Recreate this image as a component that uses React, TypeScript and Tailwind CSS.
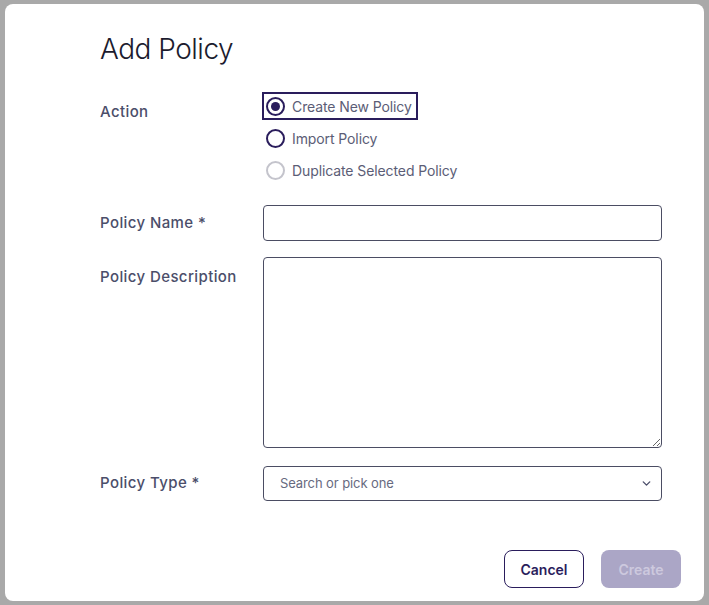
import { ChevronDown } from "lucide-react"

const font = { fontFamily: "Inter, 'Noto Sans', sans-serif" }

function Radio({ label, checked, focused, disabled }: { label: string; checked?: boolean; focused?: boolean; disabled?: boolean }) {
  return (
    <div className="h-[26px] flex items-center">
      <div
        className={
          "h-[26px] flex items-center gap-[7px] pl-[3px] pr-[5px] " +
          (focused ? "outline-2 outline-[#2a1d5c] -outline-offset-1" : "")
        }
      >
        <span
          className={
            "w-[19px] h-[19px] rounded-full border-2 flex items-center justify-center bg-white " +
            (disabled ? "border-[#c4c4cc]" : "border-[#2a1d5c]")
          }
        >
          {checked && <span className="w-[9px] h-[9px] rounded-full bg-[#2a1d5c]" />}
        </span>
        <span className="text-[14px] text-[#5b5d76] tracking-[-0.1px]">{label}</span>
      </div>
    </div>
  )
}

export default function App() {
  return (
    <div className="w-[709px] h-[605px] bg-[#a9a9a9] pt-[4px] pb-[4px] px-[5px]" style={font}>
      <div className="bg-white rounded-[8px] h-full pl-[95px] pr-[23px] pt-[27px] flex flex-col">
        <h1 className="text-[28px] leading-[36px] text-[#1c1b2e] font-light tracking-[-0.5px]">Add Policy</h1>

        <div className="flex mt-[26px]">
          <div className="w-[163px] pt-[8px] text-[15px] font-medium tracking-[0.4px] text-[#4b4e6a]">Action</div>
          <div className="flex flex-col gap-[6px]">
            <Radio label="Create New Policy" checked focused />
            <Radio label="Import Policy" />
            <Radio label="Duplicate Selected Policy" disabled />
          </div>
        </div>

        <div className="flex items-center mt-[22px] mr-[19px]">
          <div className="w-[163px] text-[15px] font-medium tracking-[0.4px] text-[#4b4e6a]">Policy Name *</div>
          <input className="flex-1 h-[36px] border border-[#4b4d63] rounded-[4px] px-3 text-sm outline-none" />
        </div>

        <div className="flex mt-[16px] mr-[19px]">
          <div className="w-[163px] pt-[9px] text-[15px] font-medium tracking-[0.4px] text-[#4b4e6a]">Policy Description</div>
          <textarea className="flex-1 h-[191px] border border-[#4b4d63] rounded-[4px] px-3 py-2 text-sm outline-none" />
        </div>

        <div className="flex items-center mt-[18px] mr-[19px]">
          <div className="w-[163px] text-[15px] font-medium tracking-[0.4px] text-[#4b4e6a]">Policy Type *</div>
          <div className="flex-1 h-[35px] border border-[#4b4d63] rounded-[4px] pl-[16px] pr-[8px] flex items-center justify-between">
            <span className="text-[13px] text-[#676a80] tracking-[-0.1px]">Search or pick one</span>
            <ChevronDown className="w-[13px] h-[13px] text-[#4b4e6a]" strokeWidth={2.5} />
          </div>
        </div>

        <div className="flex justify-end gap-[17px] mt-[49px]">
          <button className="w-[80px] h-[38px] rounded-[8px] border border-[#2a1d5c] text-[14px] font-semibold text-[#2a1d5c]">
            Cancel
          </button>
          <button className="w-[80px] h-[38px] rounded-[8px] bg-[#aba6c6] text-[14px] font-semibold text-[#cdc9de]">
            Create
          </button>
        </div>
      </div>
    </div>
  )
}
